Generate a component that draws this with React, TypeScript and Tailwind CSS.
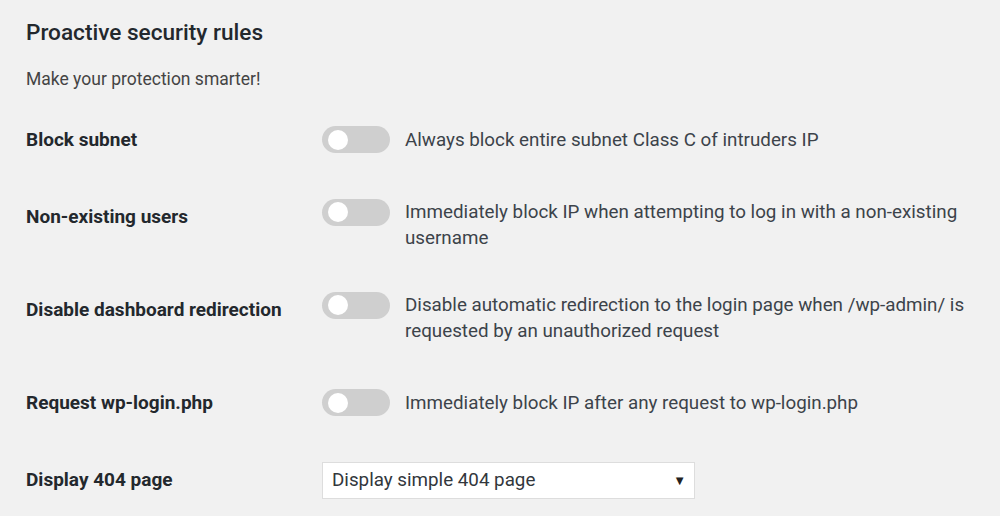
import React from 'react';

type Rule = {
  label: string;
  description: string;
};

const RULES: Rule[] = [
  { label: 'Block subnet', description: 'Always block entire subnet Class C of intruders IP' },
  { label: 'Non-existing users', description: 'Immediately block IP when attempting to log in with a non-existing username' },
  { label: 'Disable dashboard redirection', description: 'Disable automatic redirection to the login page when /wp-admin/ is requested by an unauthorized request' },
  { label: 'Request wp-login.php', description: 'Immediately block IP after any request to wp-login.php' },
];

const Toggle: React.FC = () => (
  <span className="relative inline-block w-[68px] h-[27px] mt-[-0.5px] shrink-0 rounded-full bg-[#cfcfcf]">
    <span className="absolute left-[6px] top-[3.5px] w-[20px] h-[20px] rounded-full bg-white" />
  </span>
);

const Row: React.FC<{ label: string; children: React.ReactNode }> = ({ label, children }) => (
  <div className="flex">
    <div className="w-[296px] shrink-0 pt-[26.5px] pb-[26.5px] text-[19px] leading-[24px] font-bold text-[#23282d]">
      {label}
    </div>
    <div className="flex items-center py-[20.5px]">{children}</div>
  </div>
);

export default function App() {
  return (
    <div className="min-h-screen w-full bg-[#f1f1f1] pl-[26px] pt-[18px] font-['Roboto',sans-serif]">
      <h2 className="text-[22.6px] leading-[30px] font-medium text-[#23282d]">Proactive security rules</h2>
      <p className="mt-[19px] text-[17.5px] leading-[24px] text-[#444]">Make your protection smarter!</p>

      <div className="mt-[10.5px]">
        {RULES.map((rule) => (
          <Row key={rule.label} label={rule.label}>
            <div className="flex items-start">
              <Toggle />
              <span className="ml-[15px] w-[575px] text-[18.8px] leading-[26px] text-[#3c434a]">
                {rule.description}
              </span>
            </div>
          </Row>
        ))}

        <Row label="Display 404 page">
          <div className="relative flex items-center w-[373px] h-[37px] bg-white border border-[#dddddd] pl-[9px] text-[18.8px] text-[#32373c]">
            Display simple 404 page
            <span className="absolute right-[8px] top-[11px] text-[13px] leading-none text-[#222]">▼</span>
          </div>
        </Row>
      </div>
    </div>
  );
}
